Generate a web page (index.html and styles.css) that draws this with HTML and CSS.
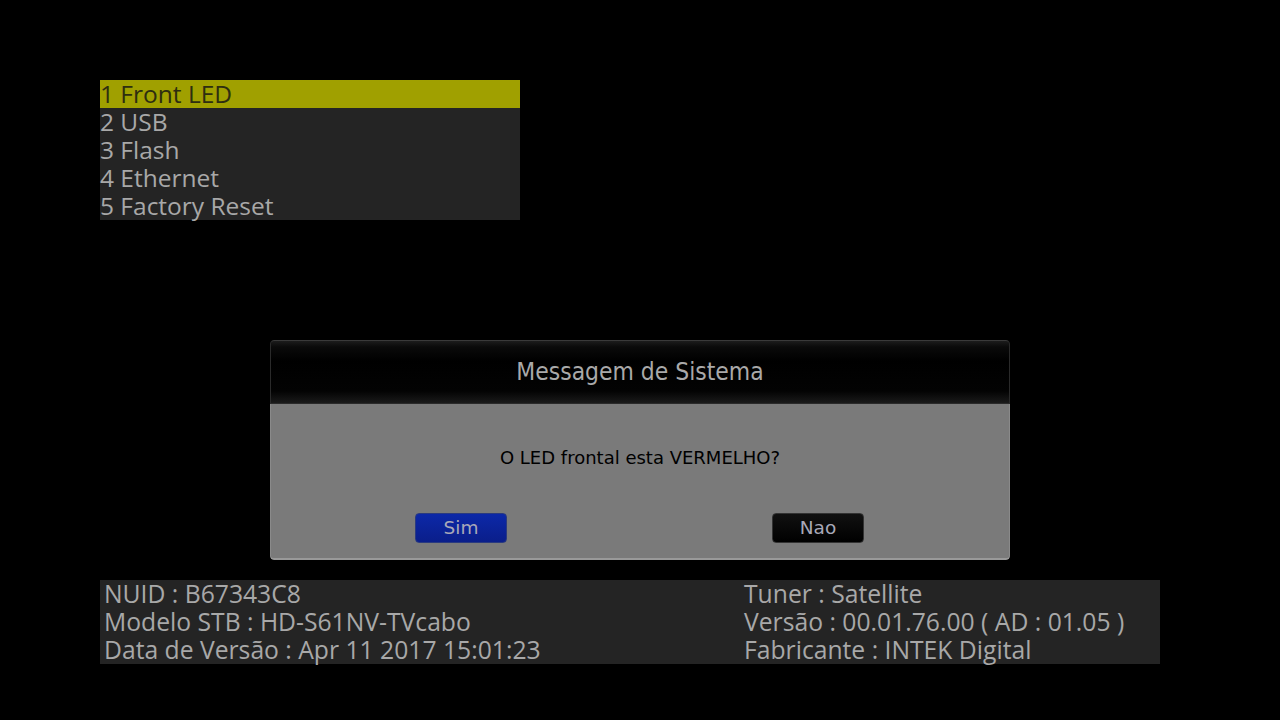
FILE: index.html
```html
<!DOCTYPE html>
<html>
<head>
<meta charset="utf-8">
<link rel="stylesheet" href="styles.css">
</head>
<body>
<div class="screen">
  <ul class="menu">
    <li class="item active">1 Front LED</li>
    <li class="item">2 USB</li>
    <li class="item">3 Flash</li>
    <li class="item">4 Ethernet</li>
    <li class="item">5 Factory Reset</li>
  </ul>

  <div class="dialog">
    <div class="dialog-head">Messagem de Sistema</div>
    <div class="dialog-body">
      <p class="question">O LED frontal esta VERMELHO?</p>
      <div class="buttons">
        <div class="btn btn-yes">Sim</div>
        <div class="btn btn-no">Nao</div>
      </div>
    </div>
  </div>

  <div class="info">
    <div class="col left">
      <div>NUID : B67343C8</div>
      <div>Modelo STB : HD-S61NV-TVcabo</div>
      <div>Data de Versão : Apr 11 2017 15:01:23</div>
    </div>
    <div class="col right">
      <div>Tuner : Satellite</div>
      <div>Versão : 00.01.76.00 ( AD : 01.05 )</div>
      <div>Fabricante : INTEK Digital</div>
    </div>
  </div>
</div>
</body>
</html>
```

FILE: styles.css
```css
html, body {
  margin: 0;
  padding: 0;
  background: #000;
}
.screen {
  width: 1280px;
  height: 720px;
  position: relative;
  font-family: "Open Sans", "DejaVu Sans", sans-serif;
  color: #a8a8a8;
}
.menu {
  list-style: none;
  margin: 0;
  padding: 0;
  position: absolute;
  left: 100px;
  top: 80px;
  width: 420px;
  background: #242424;
}
.item {
  height: 28px;
  line-height: 28px;
  font-size: 24.5px;
  white-space: nowrap;
}
.item.active {
  background: #a0a000;
  color: #2e2e10;
}
.dialog {
  position: absolute;
  left: 270px;
  top: 340px;
  width: 740px;
  height: 220px;
  display: flex;
  flex-direction: column;
  border-radius: 4px;
  overflow: hidden;
}
.dialog-head {
  height: 62px;
  line-height: 62px;
  text-align: center;
  font-family: "DejaVu Sans Condensed", "DejaVu Sans", sans-serif;
  font-size: 24.4px;
  color: #a9a9a9;
  background: linear-gradient(#1c1c1c 0px, #0a0a0a 6px, #000 20px, #030303 50px, #1a1a1a 62px);
  border: 1px solid #2a2a2a;
  border-top-color: #3a3a3a;
  border-radius: 4px 4px 0 0;
}
.dialog-body {
  flex: 1;
  background: #7a7a7a;
  border-bottom: 2px solid #999;
  border-left: 1px solid #8a8a8a;
  border-right: 1px solid #8a8a8a;
  border-radius: 0 0 4px 4px;
  display: flex;
  flex-direction: column;
  align-items: center;
}
.question {
  margin: 40px 0 0;
  font-family: "DejaVu Sans", sans-serif;
  font-size: 18px;
  color: #000;
  height: 28px;
  line-height: 28px;
}
.buttons {
  margin-top: 41px;
  width: 449px;
  padding-right: 1px;
  display: flex;
  justify-content: space-between;
}
.btn {
  width: 90px;
  height: 28px;
  line-height: 28px;
  text-align: center;
  font-family: "DejaVu Sans", sans-serif;
  font-size: 18.5px;
  color: #a8a8b8;
  border-radius: 4px;
}
.btn-yes {
  background: linear-gradient(#0c28a8, #0a1e8a);
  border: 1px solid #2a3a80;
}
.btn-no {
  background: linear-gradient(#111, #000);
  border: 1px solid #333;
}
.info {
  position: absolute;
  left: 100px;
  top: 580px;
  width: 1060px;
  height: 84px;
  background: #242424;
  display: flex;
  font-size: 24.7px;
}
.col {
  padding-left: 4px;
}
.col div {
  height: 28px;
  line-height: 28px;
  white-space: nowrap;
}
.left {
  width: 636px;
}
```
